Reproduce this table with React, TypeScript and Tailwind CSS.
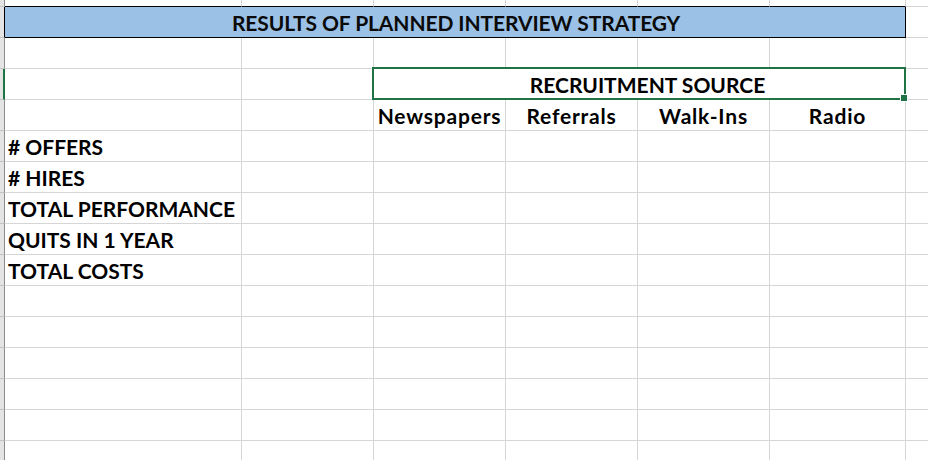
import React from "react";

const W = ["w-[237px]", "w-[132px]", "w-[132px]", "w-[132px]", "w-[132px]", "w-[136px]"];
const font = { fontFamily: "Lato, 'Liberation Sans', sans-serif" };

function Strip({ h, selected }: { h: string; selected?: boolean }) {
  return (
    <div
      className={`${h} w-[5px] shrink-0 bg-[#e4e4e4] border-b border-b-[#c4c4c4] ${
        selected ? "border-r-2 border-r-[#217346]" : "border-r border-r-[#8c8c8c]"
      }`}
    />
  );
}

function Cell({ i, children, className = "" }: { i: number; children?: React.ReactNode; className?: string }) {
  return (
    <div className={`${W[i]} shrink-0 border-r border-b border-[#d6d6d6] flex items-center overflow-visible whitespace-nowrap ${className}`}>
      {children}
    </div>
  );
}

function Tail() {
  return <div className="flex-1 border-b border-[#d6d6d6]" />;
}

function EmptyRow() {
  return (
    <div className="flex h-[31px]">
      <Strip h="h-[31px]" />
      {W.map((_, i) => (
        <Cell key={i} i={i} />
      ))}
      <Tail />
    </div>
  );
}

const labels = ["# OFFERS", "# HIRES", "TOTAL PERFORMANCE", "QUITS IN 1 YEAR", "TOTAL COSTS"];
const sources = ["Newspapers", "Referrals", "Walk-Ins", "Radio"];

export default function App() {
  return (
    <div className="w-[928px] h-[460px] overflow-hidden bg-white text-black font-bold text-[21px]" style={font}>
      {/* row 0 (partial) */}
      <div className="flex h-[7px]">
        <Strip h="h-[7px]" />
        {W.map((_, i) => (
          <div key={i} className={`${W[i]} shrink-0 border-r border-r-[#d6d6d6] border-b border-b-black`} />
        ))}
        <Tail />
      </div>
      {/* title row */}
      <div className="flex h-[31px]">
        <div className="h-[31px] w-[5px] shrink-0 bg-[#e4e4e4] border-b border-b-[#c4c4c4] border-r border-r-black" />
        <div className="w-[901px] shrink-0 bg-[#9bc2e6] border-r border-b border-black flex items-center justify-center pt-[1px] pl-[2px] text-[#0a0a0a] tracking-[-0.1px]">
          RESULTS OF PLANNED INTERVIEW STRATEGY
        </div>
        <Tail />
      </div>
      <EmptyRow />
      {/* recruitment source */}
      <div className="flex h-[31px]">
        <Strip h="h-[31px]" selected />
        <Cell i={0} />
        <Cell i={1} />
        <div className="w-[532px] shrink-0 border-r border-b border-[#d6d6d6] relative flex items-center justify-center pl-[16px] pt-[2px]">
          RECRUITMENT SOURCE
          <div className="absolute -top-[2px] -left-[2px] -right-[1px] -bottom-[1px] border-2 border-[#217346]" />
          <div className="absolute -right-[2px] -bottom-[2px] w-[6px] h-[6px] bg-[#217346] outline outline-1 outline-white" />
        </div>
        <Tail />
      </div>
      {/* sources header */}
      <div className="flex h-[31px]">
        <Strip h="h-[31px]" />
        <Cell i={0} />
        <Cell i={1} />
        {sources.map((s, k) => (
          <Cell key={s} i={k + 2} className="justify-center pt-[2px] tracking-[0.8px]">
            {s}
          </Cell>
        ))}
        <Tail />
      </div>
      {labels.map((l) => (
        <div key={l} className="flex h-[31px]">
          <Strip h="h-[31px]" />
          <Cell i={0} className="pl-[3px] pt-[2px]">
            {l}
          </Cell>
          {W.slice(1).map((_, i) => (
            <Cell key={i} i={i + 1} />
          ))}
          <Tail />
        </div>
      ))}
      {Array.from({ length: 6 }).map((_, i) => (
        <EmptyRow key={i} />
      ))}
    </div>
  );
}
